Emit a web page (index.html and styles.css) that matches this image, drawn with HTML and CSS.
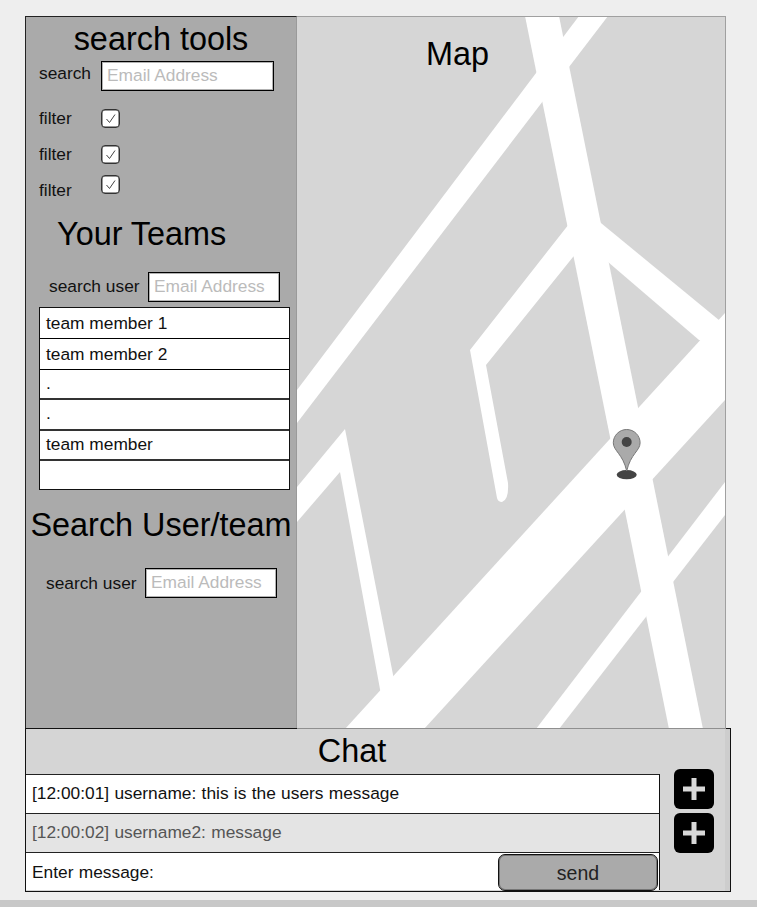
FILE: index.html
```html
<!DOCTYPE html>
<html lang="en">
<head>
<meta charset="utf-8">
<title>Map and team chat</title>
<link rel="stylesheet" href="styles.css">
</head>
<body>
<div class="app">
  <div class="top">
    <aside class="sidebar">
      <h2 class="title title-tools">search tools</h2>
      <div class="field field-search">
        <label class="label label-search">search</label>
        <input class="input input-search" type="text" placeholder="Email Address">
      </div>
      <div class="filter filter-1"><span class="filter-label">filter</span><span class="check"><svg viewBox="0 0 19 19" width="19" height="19"><path d="M5.500 10l3 3.500 5.500-8" fill="none" stroke="#444" stroke-width="1"/></svg></span></div>
      <div class="filter filter-2"><span class="filter-label">filter</span><span class="check"><svg viewBox="0 0 19 19" width="19" height="19"><path d="M5.500 10l3 3.500 5.500-8" fill="none" stroke="#444" stroke-width="1"/></svg></span></div>
      <div class="filter filter-3"><span class="filter-label filter-label-low">filter</span><span class="check"><svg viewBox="0 0 19 19" width="19" height="19"><path d="M5.500 10l3 3.500 5.500-8" fill="none" stroke="#444" stroke-width="1"/></svg></span></div>
      <h2 class="title title-teams">Your Teams</h2>
      <div class="field field-user">
        <label class="label label-user">search user</label>
        <input class="input input-user" type="text" placeholder="Email Address">
      </div>
      <ul class="members">
        <li class="member member-thin">team member 1</li>
        <li class="member member-thin">team member 2</li>
        <li class="member">.</li>
        <li class="member">.</li>
        <li class="member">team member</li>
        <li class="member member-last"></li>
      </ul>
      <h2 class="title title-search">Search User/team</h2>
      <div class="field field-user2">
        <label class="label label-user">search user</label>
        <input class="input input-user" type="text" placeholder="Email Address">
      </div>
    </aside>
    <main class="map">
      <svg class="map-art" viewBox="297 16 428 713" width="428" height="713" aria-hidden="true">
        <g fill="#fff">
          <polygon points="525,16 559,16 703,729 669,729"/>
          <polygon points="579,16 608,16 297,423 297,390"/>
          <path d="M580,210 L590,240 L573,257 L486,365 L508,483 Q509,500 502,502 Q498,502 497,498 L470,350 Z"/>
          <polygon points="590,214 608,262 699,340 719,345 725,325"/>
          <polygon points="725,313 345,729 424,729 725,400"/>
          <polygon points="297,487 345,429 396,690 382,700 340,472 297,522"/>
          <polygon points="725,482 536,729 559,729 725,515"/>
        </g>
        <ellipse cx="626.7" cy="474.7" rx="10" ry="4.6" fill="#444"/>
        <path d="M626.700 429.500c-7.400 0-13.400 6-13.400 13.300 0 8 9.500 11 13.400 28.200 3.900-17.200 13.400-20.200 13.400-28.200 0-7.300-6-13.300-13.400-13.300z" fill="#aaa" stroke="#777" stroke-width="1"/>
        <circle cx="626.7" cy="442" r="5" fill="#444"/>
      </svg>
      <h2 class="title title-map">Map</h2>
    </main>
  </div>
  <section class="chat">
    <div class="chat-main">
      <h2 class="title title-chat">Chat</h2>
      <div class="msg">[12:00:01] username: this is the users message</div>
      <div class="msg msg-alt">[12:00:02] username2: message</div>
      <div class="msg msg-entry"><span>Enter message:</span><button class="send" type="button">send</button></div>
    </div>
    <div class="chat-side">
      <button class="plus" type="button" aria-label="add"><svg viewBox="0 0 24 24" width="24" height="24"><path d="M9.500 1h5v8.500H23v5h-8.500V23h-5v-8.500H1v-5h8.500z" fill="#d8d8d8"/></svg></button>
      <button class="plus" type="button" aria-label="add"><svg viewBox="0 0 24 24" width="24" height="24"><path d="M9.500 1h5v8.500H23v5h-8.500V23h-5v-8.500H1v-5h8.500z" fill="#d8d8d8"/></svg></button>
    </div>
  </section>
</div>
<div class="hbar"></div>
</body>
</html>
```
FILE: styles.css
```css
* { box-sizing: border-box; }
html, body { margin: 0; padding: 0; height: 907px; overflow: hidden; }
body {
  background: #eeeeee;
  font-family: "Liberation Sans", Arial, sans-serif;
  font-size: 17.33px;
  color: #111;
}
.app { margin: 16px 0 0 25px; width: 706px; }
.top { display: flex; width: 701px; }
.sidebar {
  width: 272px;
  height: 712px;
  background: #aaaaaa;
  border-top: 1px solid #222;
  border-left: 1px solid #222;
  border-right: 1px solid #9a9a9a;
}
.title { margin: 0; font-weight: 400; font-size: 32.4px; line-height: 38px; color: #000; }
.title-tools { margin-top: 3px; text-align: center; }
.title-teams { margin: 21px 0 0 31px; }
.title-search { margin-top: 16px; text-align: center; white-space: nowrap; }
.field { display: flex; align-items: flex-start; }
.field-search { margin: 3px 0 0 13px; height: 30px; }
.field-user { margin: 19px 0 0 23px; height: 30px; }
.field-user2 { margin: 24px 0 0 20px; height: 30px; }
.field-user2 .label { line-height: 30px; }
.label { white-space: nowrap; }
.label-search { width: 62px; line-height: 25px; }
.label-user { width: 99px; line-height: 28px; }
.input {
  height: 30px;
  padding: 0 5px 1px;
  background: #fff;
  border: 1px solid #000;
  box-shadow: inset 0 0 0 1px rgba(0, 0, 0, 0.3);
  border-radius: 0;
  font: inherit;
  outline: none;
}
.input::placeholder { color: #bbbbbb; opacity: 1; }
.input-search { width: 173px; }
.input-user { width: 132px; }
.filter { display: flex; height: 19px; margin-left: 13px; }
.filter-1 { margin-top: 18px; }
.filter-2 { margin-top: 17px; }
.filter-3 { margin-top: 11px; }
.filter-label { width: 62px; line-height: 19px; }
.filter-label-low { margin-top: 6px; }
.check {
  display: block;
  width: 19px;
  height: 19px;
  background: #fff;
  border: 1px solid #333;
  border-radius: 4px;
  box-shadow: inset 0 0 0 0.5px #333;
}
.check svg { display: block; margin: -1px; }
.members {
  display: flex;
  flex-direction: column;
  list-style: none;
  margin: 5px 0 0 13px;
  padding: 0;
  width: 251px;
  height: 183px;
  background: #fff;
  border: 1px solid #111;
}
.member {
  flex: 1;
  padding-left: 6px;
  line-height: 27px;
  border-bottom: 2px solid #333;
}
.member-thin { border-bottom: 1px solid #000; line-height: 30px; }
.member-last { border-bottom: 0; }
.map {
  position: relative;
  width: 429px;
  height: 713px;
  margin-bottom: -1px;
  background: #d6d6d6;
  border-top: 1px solid #a0a0a0;
  border-right: 1px solid #a0a0a0;
  border-bottom: 1px solid #8f8f8f;
  overflow: hidden;
}
.map-art { position: absolute; left: 0; top: -1px; }
.title-map { position: relative; margin: 18px 0 0; padding-right: 1px; width: 322px; text-align: center; }
.chat {
  display: flex;
  width: 706px;
  height: 164px;
  background: linear-gradient(to right, #d5d5d5 699px, #cdcdcd 699px);
  border: 1px solid #111;
}
.chat-main { width: 634px; }
.title-chat { height: 45px; line-height: 45px; padding-left: 18px; text-align: center; }
.msg {
  height: 39px;
  padding-left: 6px;
  line-height: 36px;
  word-spacing: 0.5px;
  background: #fff;
  border-top: 1px solid #222;
  border-right: 1px solid #111;
  white-space: nowrap;
}
.msg-alt { background: #e4e4e4; color: #555; height: 39px; }
.msg-entry {
  display: flex;
  justify-content: space-between;
  align-items: flex-end;
  height: 38px;
  padding-right: 1px;
}
.send {
  width: 160px;
  height: 37px;
  margin-bottom: -1px;
  padding: 0 0 3px;
  background: #aaaaaa;
  border: 1px solid #111;
  box-shadow: inset 0 0 0 1px rgba(0, 0, 0, 0.3);
  border-radius: 7px;
  font: inherit;
  font-size: 19.5px;
  color: #222;
}
.chat-side {
  display: flex;
  flex-direction: column;
  gap: 4px;
  padding: 40px 0 0 14px;
}
.plus {
  display: flex;
  align-items: center;
  justify-content: center;
  width: 40px;
  height: 40px;
  padding: 0;
  background: #000;
  border: 0;
  border-radius: 6px;
}
.hbar { height: 7px; margin-top: 8px; background: #c8c8c8; }
```
